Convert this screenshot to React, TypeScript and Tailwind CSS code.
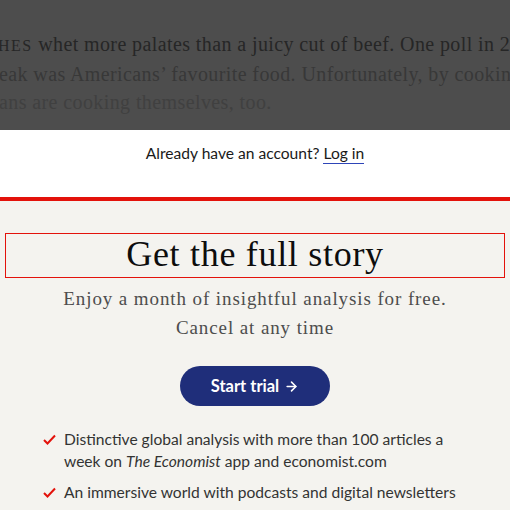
import { ArrowRight } from 'lucide-react';

const serif = { fontFamily: '"Liberation Serif", "DejaVu Serif", serif' };

function Check() {
  return (
    <svg width="13" height="11" viewBox="0 0 13 11" className="mt-[6px] shrink-0">
      <path d="M1 6l3.5 3.5L12 1.5" fill="none" stroke="#e3120b" strokeWidth="2" />
    </svg>
  );
}

export default function App() {
  return (
    <div className="w-[510px] h-[510px] overflow-hidden bg-[#f4f3ef] font-['Lato',sans-serif]">
      {/* dimmed article */}
      <div className="h-[130px] bg-[#4d4d4d] overflow-hidden pt-[30px]">
        <div className="w-[700px] text-[20px] leading-[28px] tracking-[0.4px] whitespace-nowrap" style={serif}>
          <p className="text-[#262626] ml-[-2px]">
            <span className="text-[16px] tracking-[1.5px]">HES</span> whet more palates than a juicy cut of beef. One poll in 2019
          </p>
          <p className="text-[#383838] ml-[-1px]">eak was Americans’ favourite food. Unfortunately, by cooking</p>
          <p className="text-[#404040] ml-[-1px]">ans are cooking themselves, too.</p>
        </div>
      </div>

      {/* login row */}
      <div className="h-[67px] bg-white flex justify-center pt-[12px] text-[15.6px] text-[#1a1a1a]">
        <span>
          Already have an account?{' '}
          <a className="border-b border-[#2e45b8] pb-[1px]">Log in</a>
        </span>
      </div>
      <div className="h-[4px] bg-[#e3120b]" />

      {/* offer */}
      <div className="pt-[32px] flex flex-col items-center">
        <h2
          className="w-[500px] h-[45px] border border-[#e3120b] text-center text-[36px] leading-[41px] tracking-[0.7px] text-[#0d0d0d]"
          style={serif}
        >
          Get the full story
        </h2>
        <p className="mt-[6px] text-center text-[19px] leading-[29px] tracking-[0.9px] text-[#4d4d4d]" style={serif}>
          Enjoy a month of insightful analysis for free.
          <br />
          Cancel at any time
        </p>
        <button className="mt-[24px] w-[150px] h-[40px] rounded-full bg-[#1f2e7a] text-white text-[16.5px] font-bold flex items-center justify-center gap-[5px]">
          Start trial <ArrowRight size={15} strokeWidth={2.5} />
        </button>
        <ul className="mt-[22px] w-[510px] pl-[43px] pr-[30px] text-[15.6px] leading-[22px] text-[#333] flex flex-col gap-[9px]">
          <li className="flex gap-[8px]">
            <Check />
            <span>
              Distinctive global analysis with more than 100 articles a week on <i>The Economist</i> app and economist.com
            </span>
          </li>
          <li className="flex gap-[8px]">
            <Check />
            <span>An immersive world with podcasts and digital newsletters</span>
          </li>
        </ul>
      </div>
    </div>
  );
}
